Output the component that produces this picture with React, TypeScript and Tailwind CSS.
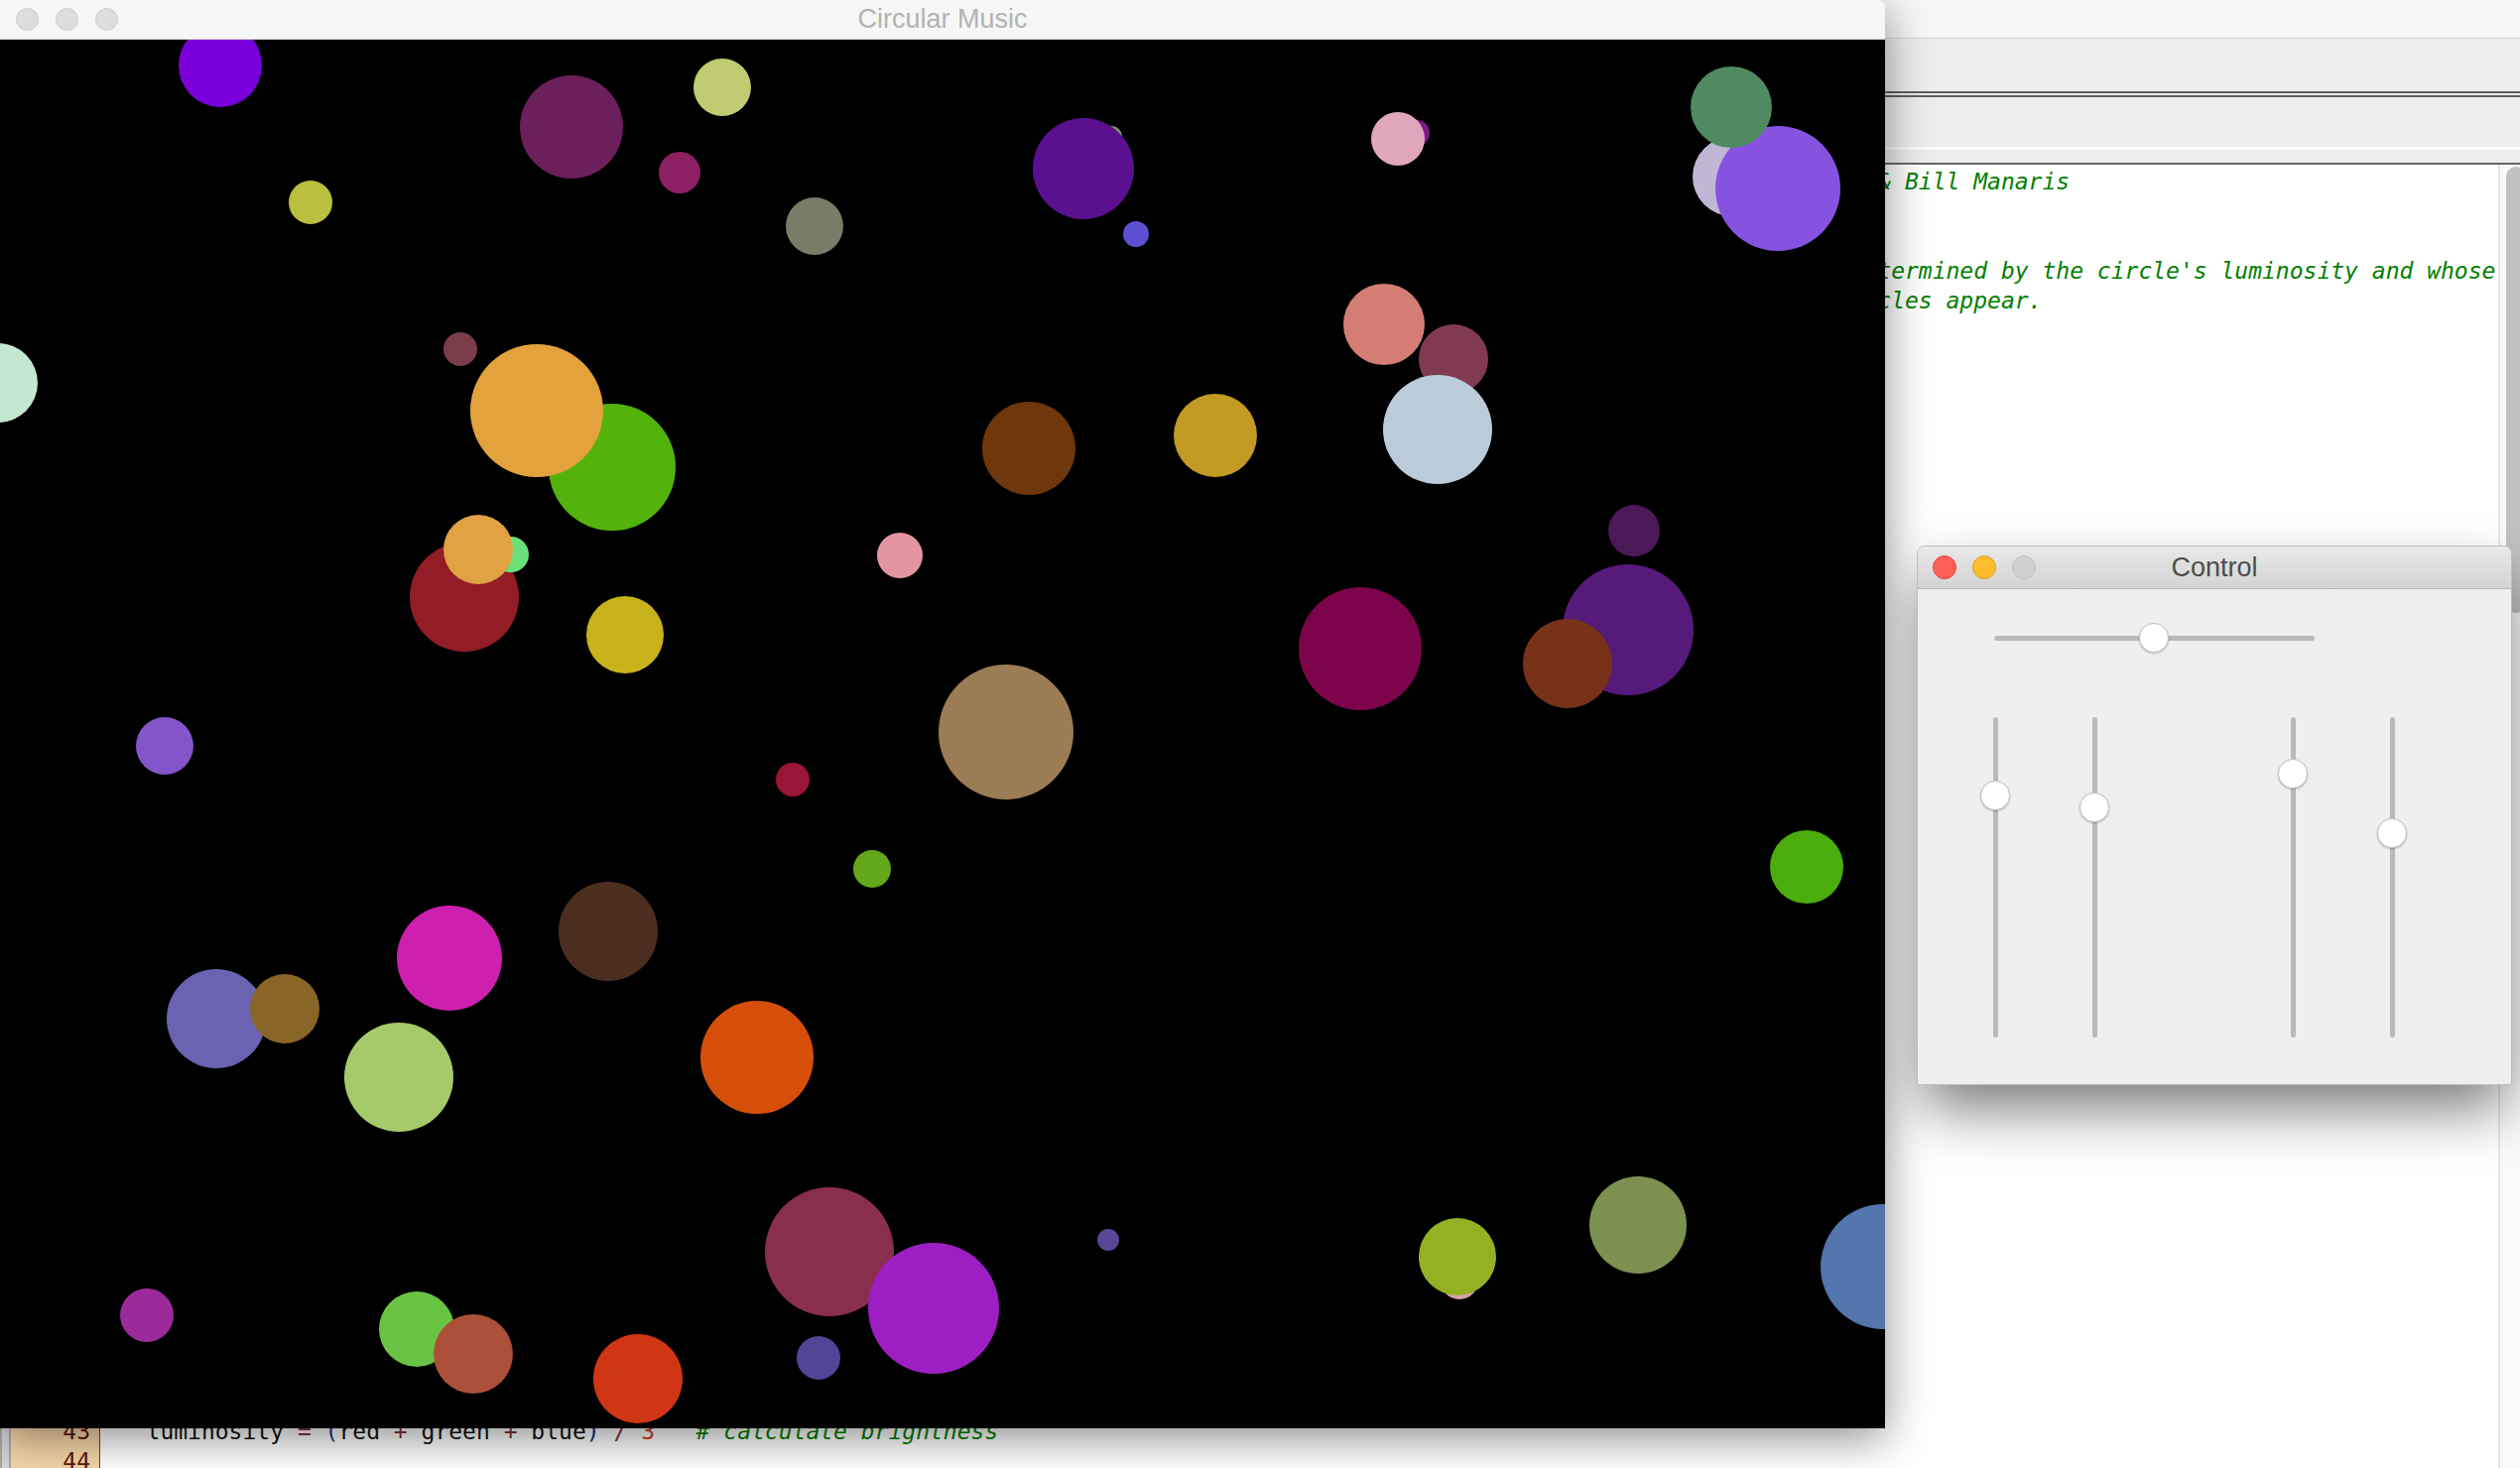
type Circle = [number, number, number, string];

// page coordinates: cx, cy, r, fill — back to front
const circles: Circle[] = [
  [222, 66, 42, '#7900d9'],
  [576, 128, 52, '#6b1f5b'],
  [728, 88, 29, '#c1cb72'],
  [685, 174, 21, '#8c2062'],
  [313, 204, 22, '#bbbf3f'],
  [821, 228, 29, '#787d67'],
  [-2, 386, 40, '#c4e8cf'],
  [464, 352, 17, '#7a3c48'],
  [617, 471, 64, '#53b30c'],
  [541, 414, 67, '#e3a23b'],
  [468, 602, 55, '#931d26'],
  [515, 559, 18, '#6be07a'],
  [482, 554, 35, '#e1a244'],
  [630, 640, 39, '#c9b31b'],
  [907, 560, 23, '#e396a0'],
  [166, 752, 29, '#8455c8'],
  [1014, 738, 68, '#9c7c55'],
  [1120, 138, 11, '#7f9b60'],
  [1092, 170, 51, '#5b108f'],
  [1145, 236, 13, '#5e50d3'],
  [1428, 134, 13, '#7b1a8b'],
  [1409, 140, 27, '#e0a7bc'],
  [1746, 178, 40, '#c0b7d6'],
  [1792, 190, 63, '#8653e0'],
  [1745, 108, 41, '#4f8a61'],
  [1395, 327, 41, '#d47d74'],
  [1465, 362, 35, '#803b52'],
  [1449, 433, 55, '#bacbda'],
  [1037, 452, 47, '#6e370c'],
  [1225, 439, 42, '#c39a23'],
  [1647, 535, 26, '#4b1858'],
  [1641, 635, 66, '#561a7a'],
  [1580, 669, 45, '#773219'],
  [1371, 654, 62, '#7d044a'],
  [799, 786, 17, '#9a1537'],
  [879, 876, 19, '#63a81a'],
  [453, 966, 53, '#ce20af'],
  [613, 939, 50, '#4c2e20'],
  [218, 1027, 50, '#6963b2'],
  [287, 1017, 35, '#896628'],
  [402, 1086, 55, '#a5ca6a'],
  [763, 1066, 57, '#d54f0b'],
  [836, 1262, 65, '#8a2e50'],
  [941, 1319, 66, '#9d1fc3'],
  [148, 1326, 27, '#9b2b9b'],
  [420, 1340, 38, '#6ac443'],
  [477, 1365, 40, '#ad503a'],
  [643, 1390, 45, '#d03613'],
  [825, 1369, 22, '#534497'],
  [1821, 874, 37, '#4aad0b'],
  [1117, 1250, 11, '#5a4695'],
  [1471, 1291, 19, '#d4a4a4'],
  [1469, 1267, 39, '#93b122'],
  [1651, 1235, 49, '#7e9050'],
  [1898, 1277, 63, '#5475ad'],
];

const codeLines: string[] = [
  '# circularMusic.py    A visual and musical piece, made of circles drawn at random on a display.'.padEnd(117) +
    'Dana Hughes & Bill Manaris',
  '#',
  '#',
  '# A note is played for each new circle drawn, whose pitch is'.padEnd(127) +
    "determined by the circle's luminosity and whose duration depends on its radius.",
  '# Sliders on the Control window change the rate at which new'.padEnd(126) + 'circles appear.',
  '#',
  '',
  'from music import *',
  'from gui import *',
  'from random import *',
  '',
  '##### define data structure',
  'minPitch = C1   # instrument pitch range',
  'maxPitch = C8',
  '',
  'minRadius = 10',
  'maxRadius = 70',
  '',
  'd = Display("Circular Music", 1000, 800)',
  'd.setColor(Color.BLACK)',
  '',
  'circles = []     # holds all circles',
  '',
  '##### define callback functions',
  'def drawCircle():',
  '   """Draws one random circle and plays the corresponding note."""',
  '',
  '   global circles',
  '',
  '   x = randint(0, d.getWidth())    # random circle position',
  '   y = randint(0, d.getHeight())',
  '   radius = randint(minRadius, maxRadius)   # random radius',
  '',
  '   # create a random color',
  '   red = randint(0, 255)',
  '   green = randint(0, 255)',
  '   blue = randint(0, 255)',
  '   color = Color(red, green, blue)',
  '',
  '   # derive pitch from circle luminosity',
  '',
  '',
  '   luminosity = (red + green + blue) / 3   # calculate brightness',
  '',
];

const mono = { fontFamily: '"DejaVu Sans Mono", "Liberation Mono", monospace' };

function CodeLine({ text, n }: { text: string; n: number }) {
  if (n === 43) {
    return (
      <div className="h-[30px] whitespace-pre text-[#111]">
        {'   luminosity '}
        <span className="text-[#7d3333]">=</span>{' '}
        <span className="text-[#1a2f7a]">(</span>red <span className="text-[#7d3333]">+</span> green{' '}
        <span className="text-[#7d3333]">+</span> blue<span className="text-[#1a2f7a]">)</span>{' '}
        <span className="text-[#7d3333]">/</span> <span className="text-[#d2421b]">3</span>
        {'   '}
        <span className="italic text-[#008000]"># calculate brightness</span>
      </div>
    );
  }
  const i = text.indexOf('#');
  if (i < 0) return <div className="h-[30px] whitespace-pre text-[#111]">{text}</div>;
  return (
    <div className="h-[30px] whitespace-pre text-[#111]">
      {text.slice(0, i)}
      <span className="italic text-[#008000]">{text.slice(i)}</span>
    </div>
  );
}

function Light({ color, ring, size }: { color: string; ring: string; size: string }) {
  return <div className={`rounded-full border ${size}`} style={{ background: color, borderColor: ring }} />;
}

function Thumb() {
  return (
    <div className="h-[30px] w-[30px] rounded-full border border-[#c4c4c4] bg-white shadow-[0_1px_2px_rgba(0,0,0,0.25)]" />
  );
}

function VSlider({ pos }: { pos: number }) {
  return (
    <div className="relative flex h-[323px] w-[30px] justify-center">
      <div className="h-full w-[5px] rounded-full bg-[#bababa]" />
      <div className="absolute left-0" style={{ top: pos - 15 }}>
        <Thumb />
      </div>
    </div>
  );
}

export default function App() {
  return (
    <div
      className="relative h-[1480px] w-[2540px] overflow-hidden bg-white"
      style={{ fontFamily: '"Liberation Sans", Arial, sans-serif' }}
    >
      {/* editor window, behind */}
      <div className="absolute inset-0 flex flex-col">
        <div className="h-[39px] border-b border-[#d4d4d4] bg-[#f6f6f6]" />
        <div className="h-[53px] bg-[#ededed]" />
        <div className="h-[2px] bg-[#5f5f5f]" />
        <div className="h-[2px] bg-[#ededed]" />
        <div className="h-[2px] bg-[#5f5f5f]" />
        <div className="h-[50px] bg-[#ededed]" />
        <div className="h-[3px] bg-[#fbfbfb]" />
        <div className="h-[13px] bg-[#ededed]" />
        <div className="h-[2px] bg-[#666666]" />
        <div className="flex min-h-0 flex-1">
          <div className="w-[11px] border-x-2 border-[#a8a8a8] bg-[#d6d6d6]" />
          <div
            className="w-[90px] border-r border-[#7a3a1a] bg-[#f6d6a8] pr-[9px] pt-[2px] text-right text-[23px] leading-[30px] text-[#5b1a0c]"
            style={mono}
          >
            {codeLines.map((_, i) => (
              <div key={i} className="h-[30px]">
                {i + 1}
              </div>
            ))}
          </div>
          <div className="min-w-0 flex-1 overflow-hidden pl-[5px] pt-[2px] text-[23px] leading-[30px]" style={mono}>
            {codeLines.map((t, i) => (
              <CodeLine key={i} text={t} n={i + 1} />
            ))}
          </div>
          <div className="w-[22px] overflow-hidden border-l-2 border-[#e6e6e6] bg-[#fafafa] pl-[6px] pt-[2px]">
            <div className="h-[450px] w-[20px] rounded-full bg-[#c2c2c2]" />
          </div>
        </div>
      </div>

      {/* Circular Music window */}
      <div className="absolute left-0 top-0 flex h-[1440px] w-[1900px] flex-col overflow-hidden rounded-tr-[8px] shadow-[0_10px_45px_rgba(0,0,0,0.45)]">
        <div className="relative flex h-[40px] items-center gap-[17px] border-b border-[#d4d4d4] bg-[#f6f6f6] pl-[16px]">
          <Light color="#dddddd" ring="#cdcdcd" size="h-[23px] w-[23px]" />
          <Light color="#dddddd" ring="#cdcdcd" size="h-[23px] w-[23px]" />
          <Light color="#dddddd" ring="#cdcdcd" size="h-[23px] w-[23px]" />
          <div className="absolute inset-x-0 top-0 flex h-[39px] items-center justify-center text-[27px] text-[#b2b2b2]">
            Circular Music
          </div>
        </div>
        <div className="flex-1 bg-black">
          <svg width="1900" height="1400" viewBox="0 0 1900 1400" className="block">
            {circles.map(([cx, cy, r, fill], i) => (
              <circle key={i} cx={cx} cy={cy - 40} r={r} fill={fill} />
            ))}
          </svg>
        </div>
      </div>

      {/* Control window */}
      <div className="absolute left-[1932px] top-[550px] flex h-[544px] w-[600px] flex-col overflow-hidden rounded-t-[8px] border border-[#bcbcbc] bg-[#efefef] shadow-[0_28px_60px_-6px_rgba(0,0,0,0.55)]">
        <div className="relative flex h-[43px] shrink-0 items-center gap-[16px] border-b border-[#b9b9b9] bg-gradient-to-b from-[#e9e9e9] to-[#d3d3d3] pl-[15px]">
          <Light color="#fe5f57" ring="#e0443e" size="h-[24px] w-[24px]" />
          <Light color="#febc2e" ring="#dea123" size="h-[24px] w-[24px]" />
          <Light color="#d0d0d0" ring="#bdbdbd" size="h-[24px] w-[24px]" />
          <div className="absolute inset-0 flex items-center justify-center text-[27px] text-[#4c4c4c]">Control</div>
        </div>
        <div className="flex flex-col pt-[34px]">
          <div className="relative ml-[77px] flex h-[30px] w-[323px] items-center">
            <div className="h-[5px] w-full rounded-full bg-[#bababa]" />
            <div className="absolute top-0" style={{ left: 161 - 15 }}>
              <Thumb />
            </div>
          </div>
          <div className="ml-[28px] mt-[65px] grid grid-cols-[repeat(5,100px)] justify-items-center">
            <VSlider pos={79} />
            <VSlider pos={91} />
            <div />
            <VSlider pos={57} />
            <VSlider pos={117} />
          </div>
        </div>
      </div>
    </div>
  );
}
